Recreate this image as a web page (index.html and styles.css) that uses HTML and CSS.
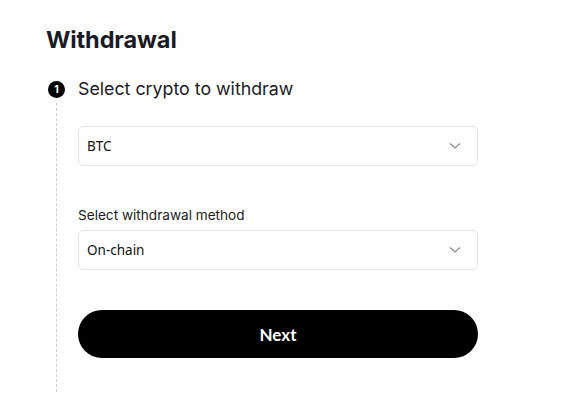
FILE: index.html
```html
<!DOCTYPE html>
<html lang="en">
<head>
<meta charset="utf-8">
<title>Withdrawal</title>
<link rel="stylesheet" href="styles.css">
</head>
<body>
<main class="page">
  <h1 class="title">Withdrawal</h1>
  <section class="step">
    <div class="step-head">
      <span class="step-num">1</span>
      <h2 class="step-title">Select crypto to withdraw</h2>
    </div>
    <div class="step-body">
      <div class="select">
        <span class="select-value">BTC</span>
        <svg class="chev" width="12" height="8" viewBox="0 0 12 8"><path d="M1 1.5 L6 6 L11 1.5" fill="none" stroke="#8a8a8a" stroke-width="1.1"/></svg>
      </div>
      <label class="field-label">Select withdrawal method</label>
      <div class="select">
        <span class="select-value">On-chain</span>
        <svg class="chev" width="12" height="8" viewBox="0 0 12 8"><path d="M1 1.5 L6 6 L11 1.5" fill="none" stroke="#8a8a8a" stroke-width="1.1"/></svg>
      </div>
      <button class="next">Next</button>
    </div>
  </section>
</main>
</body>
</html>
```
FILE: styles.css
```css
* { box-sizing: border-box; }
html, body { margin: 0; padding: 0; background: #fff; }
.page {
  padding: 24px 0 0 46px;
  width: 478px;
  font-family: Inter, "Noto Sans", sans-serif;
  color: #1b1b24;
}
.title {
  margin: 0;
  font-size: 23.5px;
  line-height: 32px;
  font-weight: 700;
  letter-spacing: -0.1px;
}
.step { margin-top: 21px; }
.step-head {
  display: flex;
  align-items: center;
  gap: 14px;
  height: 24px;
}
.step-num {
  width: 17px;
  height: 17px;
  border-radius: 50%;
  background: #000;
  color: #fff;
  font-size: 10.5px;
  font-weight: 700;
  display: flex;
  align-items: center;
  justify-content: center;
  margin-left: 2px;
}
.step-title {
  margin: 0;
  font-size: 17.8px;
  font-weight: 400;
  line-height: 24px;
  margin-left: -1px;
}
.step-body {
  margin-left: 10px;
  margin-top: 2px;
  padding: 23px 0 34px 21px;
  border-left: 1px dashed #cfcfcf;
  display: flex;
  flex-direction: column;
}
.select {
  height: 40px;
  border: 1px solid #e3e3e3;
  border-radius: 5px;
  display: flex;
  align-items: center;
  justify-content: space-between;
  padding: 0 16px 0 8px;
}
.select-value {
  font-family: "Noto Sans", sans-serif;
  font-size: 13.5px;
  color: #111;
}
.field-label {
  margin-top: 40px;
  margin-bottom: 6px;
  font-size: 13.6px;
  line-height: 18px;
}
.next {
  margin-top: 40px;
  height: 48px;
  border: 0;
  border-radius: 24px;
  background: #000;
  color: #fff;
  font-family: Lato, sans-serif;
  font-weight: 700;
  font-size: 17px;
}
```
